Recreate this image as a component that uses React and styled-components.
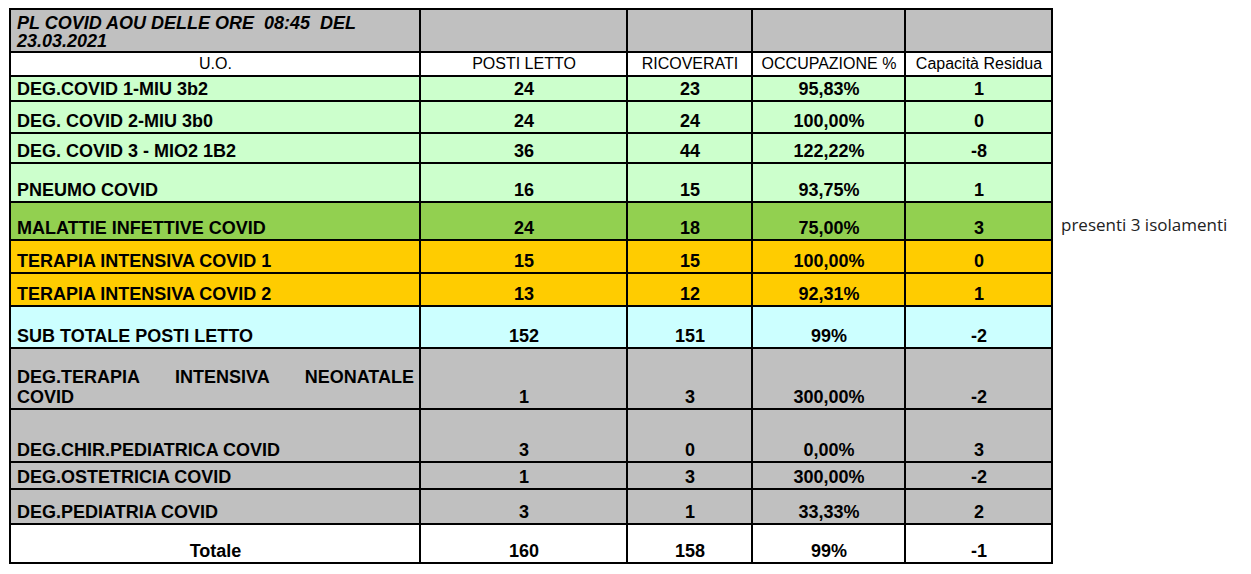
import React from 'react'
import styled, { createGlobalStyle } from 'styled-components'

const GREEN = '#ccffcc'
const DARK_GREEN = '#92d050'
const ORANGE = '#ffcc00'
const CYAN = '#ccffff'
const GREY = '#c0c0c0'

const rows = [
  { name: 'DEG.COVID 1-MIU 3b2', pl: 24, ric: 23, occ: '95,83%', cap: 1, bg: GREEN, h: 25 },
  { name: 'DEG. COVID 2-MIU 3b0', pl: 24, ric: 24, occ: '100,00%', cap: 0, bg: GREEN, h: 32 },
  { name: 'DEG. COVID 3 - MIO2 1B2', pl: 36, ric: 44, occ: '122,22%', cap: -8, bg: GREEN, h: 30 },
  { name: 'PNEUMO COVID', pl: 16, ric: 15, occ: '93,75%', cap: 1, bg: GREEN, h: 39 },
  { name: 'MALATTIE INFETTIVE COVID', pl: 24, ric: 18, occ: '75,00%', cap: 3, bg: DARK_GREEN, h: 38, note: 'presenti 3 isolamenti' },
  { name: 'TERAPIA INTENSIVA COVID 1', pl: 15, ric: 15, occ: '100,00%', cap: 0, bg: ORANGE, h: 33 },
  { name: 'TERAPIA INTENSIVA COVID 2', pl: 13, ric: 12, occ: '92,31%', cap: 1, bg: ORANGE, h: 33 },
  { name: 'SUB TOTALE POSTI LETTO', pl: 152, ric: 151, occ: '99%', cap: -2, bg: CYAN, h: 42 },
  { name: 'DEG.TERAPIA INTENSIVA NEONATALE COVID', pl: 1, ric: 3, occ: '300,00%', cap: -2, bg: GREY, h: 61, align: 'justify' },
  { name: 'DEG.CHIR.PEDIATRICA COVID', pl: 3, ric: 0, occ: '0,00%', cap: 3, bg: GREY, h: 53 },
  { name: 'DEG.OSTETRICIA COVID', pl: 1, ric: 3, occ: '300,00%', cap: -2, bg: GREY, h: 27 },
  { name: 'DEG.PEDIATRIA COVID', pl: 3, ric: 1, occ: '33,33%', cap: 2, bg: GREY, h: 35 },
  { name: 'Totale', pl: 160, ric: 158, occ: '99%', cap: -1, bg: '#fff', h: 39, align: 'center' },
]

const widths = [410, 207, 125, 153, 147, 190]

const App = () => (
  <>
    <GlobalStyle />
    <Page>
      <Sheet>
        <colgroup>
          {widths.map((w, i) => <Col key={i} $w={w} />)}
        </colgroup>
        <tbody>
          <Row $h={43}>
            <TitleCell $align="left">{'PL COVID AOU DELLE ORE  08:45  DEL 23.03.2021'}</TitleCell>
            <Cell $bg={GREY} />
            <Cell $bg={GREY} />
            <Cell $bg={GREY} />
            <Cell $bg={GREY} />
            <NoteCell />
          </Row>
          <Row $h={24}>
            <HeadCell>U.O.</HeadCell>
            <HeadCell>POSTI LETTO</HeadCell>
            <HeadCell>RICOVERATI</HeadCell>
            <HeadCell>OCCUPAZIONE %</HeadCell>
            <HeadCell>Capacità Residua</HeadCell>
            <NoteCell />
          </Row>
          {rows.map((r) => (
            <Row key={r.name} $h={r.h}>
              <Cell $bg={r.bg} $align={r.align || 'left'}>{r.name}</Cell>
              <Cell $bg={r.bg} $align="center">{r.pl}</Cell>
              <Cell $bg={r.bg} $align="center">{r.ric}</Cell>
              <Cell $bg={r.bg} $align="center">{r.occ}</Cell>
              <Cell $bg={r.bg} $align="center">{r.cap}</Cell>
              <NoteCell>{r.note}</NoteCell>
            </Row>
          ))}
        </tbody>
      </Sheet>
    </Page>
  </>
)

// Styled Components

const GlobalStyle = createGlobalStyle`
  body {
    margin: 0;
    background: #fff;
    color: #000;
    font-family: "Liberation Sans", Arial, sans-serif;
  }
`

const Page = styled.div`
  padding: 8px 0 0 9px;
`

const Sheet = styled.table`
  border-collapse: collapse;
  table-layout: fixed;
`

const Col = styled.col`
  width: ${p => p.$w}px;
`

const Row = styled.tr`
  height: ${p => p.$h}px;
`

const Cell = styled.td`
  border: 2px solid #000;
  background: ${p => p.$bg || '#fff'};
  padding: 0 5px 1px 6px;
  vertical-align: bottom;
  text-align: ${p => p.$align || 'center'};
  font-size: 18px;
  font-weight: bold;
  line-height: 20px;
`

const TitleCell = styled(Cell)`
  background: ${GREY};
  font-style: italic;
  line-height: 18px;
  padding: 0 5px 1px 6px;
  white-space: pre-wrap;
`

const HeadCell = styled(Cell)`
  font-size: 16px;
  font-weight: normal;
  text-align: center;
`

const NoteCell = styled.td`
  padding: 0 0 5px 8px;
  vertical-align: bottom;
  font-family: "Open Sans", "Noto Sans", sans-serif;
  font-size: 17px;
  line-height: 20px;
  color: #222;
  white-space: nowrap;
`

export default App
